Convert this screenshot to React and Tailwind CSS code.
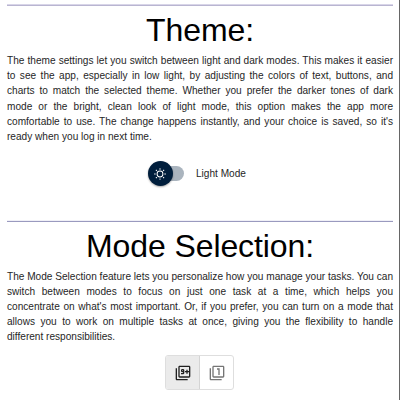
import { MdFilter1, MdFilter9Plus } from "react-icons/md";

function Paragraph({ lines, className }) {
  return (
    <p className={`text-[10.1px] text-[#262626] ${className}`}>
      {lines.map((line, i) => (
        <span
          key={line}
          className={
            i < lines.length - 1
              ? "block whitespace-nowrap [text-align-last:justify]"
              : "block whitespace-nowrap"
          }
        >
          {line}
        </span>
      ))}
    </p>
  );
}

function Heading({ children }) {
  return (
    <h1 className="mt-1 text-center text-[32px] leading-[40px] tracking-[-0.1px] text-black">
      {children}
    </h1>
  );
}

function ThemeSwitch() {
  return (
    <div className="flex h-[26px] w-9 items-center">
      <div className="z-10 flex h-[25px] w-[25px] shrink-0 items-center justify-center rounded-full bg-[#001e3c] shadow-[0_1px_2px_rgba(0,0,0,0.35)]">
        <svg viewBox="0 0 20 20" className="mr-px h-3.5 w-3.5" fill="#fff">
          <path d="M9.305 1.667V3.75h1.389V1.667h-1.39zm-4.707 1.95l-.982.982L5.09 6.072l.982-.982-1.473-1.473zm10.802 0L13.927 5.09l.982.982 1.473-1.473-.982-.982zM10 5.139a4.872 4.872 0 00-4.862 4.86A4.872 4.872 0 0010 14.862 4.872 4.872 0 0014.86 10 4.872 4.872 0 0010 5.139zm0 1.389A3.462 3.462 0 0113.471 10a3.462 3.462 0 01-3.473 3.472A3.462 3.462 0 016.527 10 3.462 3.462 0 0110 6.528zM1.665 9.305v1.39h2.083v-1.39H1.666zm14.583 0v1.39h2.084v-1.39h-2.084zM5.09 13.928L3.616 15.4l.982.982 1.473-1.473-.982-.982zm9.82 0l-.982.982 1.473 1.473.982-.982-1.473-1.473zM9.305 16.25v2.083h1.389V16.25h-1.39z" />
        </svg>
      </div>
      <div className="-ml-3 h-[15px] w-[23px] rounded-r-full bg-[#aab4be]" />
    </div>
  );
}

export default function App() {
  return (
    <div className="flex h-[400px] w-[400px] overflow-hidden bg-white font-['Liberation_Sans',Arial,sans-serif]">
      <main className="w-[399px] pl-[7px] pr-[6px] pt-1">
        <section className="h-[216px]">
          <div className="h-0.5 border-b border-[#b9b5d1] bg-[#d8d5e8]" />
          <Heading>Theme:</Heading>
          <Paragraph
            className="mt-[3.1px] leading-[15.15px]"
            lines={[
              "The theme settings let you switch between light and dark modes. This makes it easier",
              "to see the app, especially in low light, by adjusting the colors of text, buttons, and",
              "charts to match the selected theme. Whether you prefer the darker tones of dark",
              "mode or the bright, clean look of light mode, this option makes the app more",
              "comfortable to use. The change happens instantly, and your choice is saved, so it's",
              "ready when you log in next time.",
            ]}
          />
          <div className="ml-[141px] mt-[16.5px] flex items-center gap-3">
            <ThemeSwitch />
            <span className="text-[10.1px] leading-[15px] text-[#262626]">Light Mode</span>
          </div>
        </section>
        <section>
          <div className="h-0.5 border-b border-[#9a9abf] bg-[#f0f0f7]" />
          <Heading>Mode Selection:</Heading>
          <Paragraph
            className="mt-[3px] leading-[15px]"
            lines={[
              "The Mode Selection feature lets you personalize how you manage your tasks. You can",
              "switch between modes to focus on just one task at a time, which helps you",
              "concentrate on what's most important. Or, if you prefer, you can turn on a mode that",
              "allows you to work on multiple tasks at once, giving you the flexibility to handle",
              "different responsibilities.",
            ]}
          />
          <div className="ml-[158px] mt-[11px] flex h-[35px] w-[69px] overflow-hidden rounded-[3px] border border-[#dedede]">
            <button className="flex w-[34px] items-center justify-center border-r border-[#d4d4d4] bg-[#ebebeb] text-[#212121]">
              <MdFilter9Plus className="h-4 w-4" />
            </button>
            <button className="flex flex-1 items-center justify-center text-[#757575]">
              <MdFilter1 className="h-4 w-4" />
            </button>
          </div>
        </section>
      </main>
      <div className="w-px bg-[#666]" />
    </div>
  );
}
